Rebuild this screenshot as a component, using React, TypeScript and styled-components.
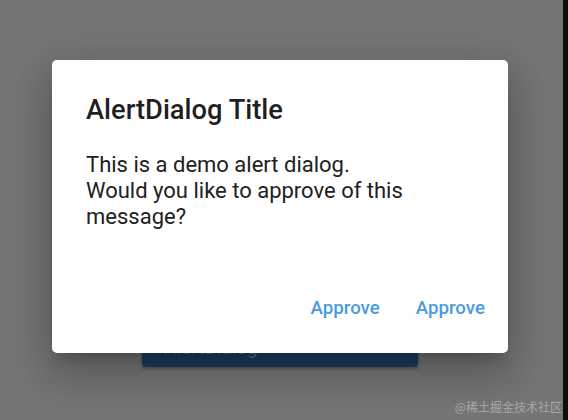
import React from 'react';
import styled, { createGlobalStyle } from 'styled-components';

const GlobalStyle = createGlobalStyle`
  html, body {
    margin: 0;
    padding: 0;
    width: 568px;
    height: 420px;
    overflow: hidden;
    font-family: Roboto, 'Noto Sans', sans-serif;
  }
`;

const Screen = styled.div`
  display: flex;
  width: 568px;
  height: 420px;
`;

/* page content dimmed by the modal barrier */
const Stage = styled.div`
  position: relative;
  flex: 1;
  background: #757575;
  overflow: hidden;
`;

const Content = styled.div`
  display: flex;
  flex-direction: column;
  padding: 325px 0 0 142px;
`;

const DimmedButton = styled.div`
  display: flex;
  align-items: flex-start;
  width: 276px;
  height: 42px;
  padding: 11px 0 0 22px;
  box-sizing: border-box;
  border-radius: 4px;
  background: #1e3d5d;
  color: #587089;
  font-size: 19px;
  font-weight: 400;
  box-shadow: 0 2px 3px rgba(0, 0, 0, 0.25);
`;

const EdgeStrip = styled.div`
  width: 5px;
  background: #0e0e0e;
`;

const Dialog = styled.div`
  position: absolute;
  left: 52px;
  top: 60px;
  width: 456px;
  display: flex;
  flex-direction: column;
  background: #fff;
  border-radius: 5px;
  box-shadow: 0 11px 15px -7px rgba(0, 0, 0, 0.2), 0 24px 38px 3px rgba(0, 0, 0, 0.14),
    0 9px 46px 8px rgba(0, 0, 0, 0.12);
`;

const Title = styled.h2`
  margin: 0;
  padding: 34px 34px 0;
  font-size: 27.3px;
  font-weight: 500;
  line-height: 33px;
  color: #1f1f1f;
`;

const Body = styled.p`
  margin: 0;
  padding: 25px 34px 0;
  font-size: 22px;
  font-weight: 400;
  line-height: 26px;
  color: #212121;
`;

const Actions = styled.div`
  display: flex;
  justify-content: flex-end;
  gap: 14px;
  padding: 53px 12px 20px;
`;

const TextButton = styled.button`
  height: 50px;
  padding: 0 11px;
  border: none;
  background: none;
  font-family: Roboto, sans-serif;
  font-size: 18.7px;
  font-weight: 500;
  color: #4b9be0;
  cursor: pointer;
`;

const Watermark = styled.div`
  position: absolute;
  right: 1px;
  bottom: 5px;
  font-family: 'Noto Sans CJK SC', sans-serif;
  font-size: 12px;
  color: #a9a9a9;
`;

export default function App() {
  return (
    <>
      <GlobalStyle />
      <Screen>
        <Stage>
          <Content>
            <DimmedButton>AlertDialog</DimmedButton>
          </Content>
          <Dialog>
            <Title>AlertDialog Title</Title>
            <Body>
              This is a demo alert dialog.
              <br />
              Would you like to approve of this message?
            </Body>
            <Actions>
              <TextButton>Approve</TextButton>
              <TextButton>Approve</TextButton>
            </Actions>
          </Dialog>
          <Watermark>@稀土掘金技术社区</Watermark>
        </Stage>
        <EdgeStrip />
      </Screen>
    </>
  );
}
